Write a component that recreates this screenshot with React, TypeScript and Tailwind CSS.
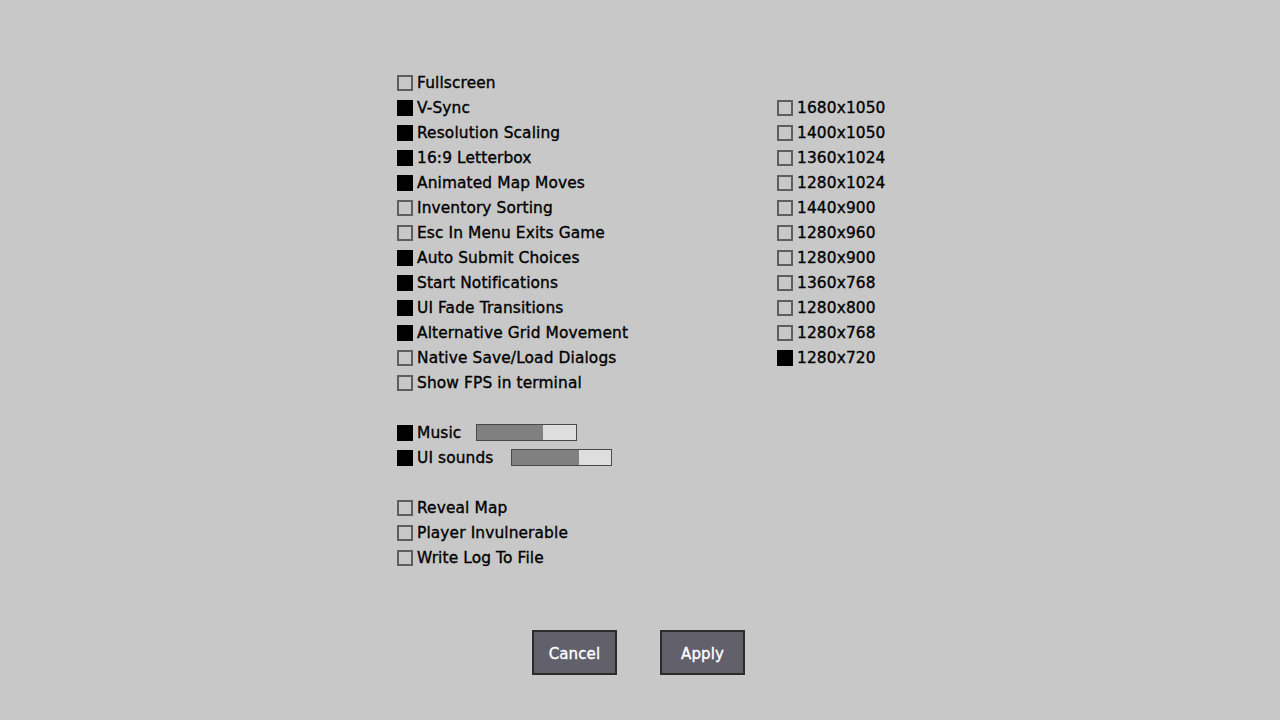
import React from "react";

const general: [string, boolean][] = [
  ["Fullscreen", false],
  ["V-Sync", true],
  ["Resolution Scaling", true],
  ["16:9 Letterbox", true],
  ["Animated Map Moves", true],
  ["Inventory Sorting", false],
  ["Esc In Menu Exits Game", false],
  ["Auto Submit Choices", true],
  ["Start Notifications", true],
  ["UI Fade Transitions", true],
  ["Alternative Grid Movement", true],
  ["Native Save/Load Dialogs", false],
  ["Show FPS in terminal", false],
];

const debug: [string, boolean][] = [
  ["Reveal Map", false],
  ["Player Invulnerable", false],
  ["Write Log To File", false],
];

const resolutions = [
  "1680x1050",
  "1400x1050",
  "1360x1024",
  "1280x1024",
  "1440x900",
  "1280x960",
  "1280x900",
  "1360x768",
  "1280x800",
  "1280x768",
  "1280x720",
];

function Box({ on }: { on: boolean }) {
  return (
    <span
      className={
        on
          ? "h-4 w-4 shrink-0 bg-black"
          : "h-4 w-4 shrink-0 border-2 border-[#5e5e5e]"
      }
    />
  );
}

function Row({ label, on, children }: { label: string; on: boolean; children?: React.ReactNode }) {
  return (
    <div className="flex h-[25px] items-center gap-[4px]">
      <Box on={on} />
      <span className="pt-[3px]">{label}</span>
      {children}
    </div>
  );
}

function Slider({ value, className }: { value: number; className: string }) {
  return (
    <div className={"h-[17px] w-[101px] border border-[#4a4a4a] bg-[#dedede] " + className}>
      <div className="h-full bg-[#808080]" style={{ width: `${value}%` }} />
    </div>
  );
}

export default function App() {
  return (
    <div
      className="h-[720px] w-[1280px] overflow-hidden bg-[#c8c8c8] text-[15.4px] tracking-[0.12px] text-black"
      style={{ fontFamily: '"DejaVu Sans", sans-serif', WebkitTextStroke: "0.35px currentColor" }}
    >
      <div className="flex pl-[397px] pt-[70px]">
        <div className="w-[380px]">
          {general.map(([l, on]) => (
            <Row key={l} label={l} on={on} />
          ))}
          <div className="h-[25px]" />
          <Row label="Music" on>
            <Slider value={66} className="ml-[11px]" />
          </Row>
          <Row label="UI sounds" on>
            <Slider value={68} className="ml-[13px]" />
          </Row>
          <div className="h-[25px]" />
          {debug.map(([l, on]) => (
            <Row key={l} label={l} on={on} />
          ))}
        </div>
        <div className="pt-[25px]">
          {resolutions.map((r) => (
            <Row key={r} label={r} on={r === "1280x720"} />
          ))}
        </div>
      </div>
      <div className="mt-[60px] flex justify-center gap-[43px] pr-[3px]">
        {["Cancel", "Apply"].map((b) => (
          <button
            key={b}
            className="flex h-[45px] w-[85px] items-center justify-center border-2 border-[#2c2c2e] bg-[#62616b] pt-[3px] text-[15px] text-white"
          >
            {b}
          </button>
        ))}
      </div>
    </div>
  );
}
